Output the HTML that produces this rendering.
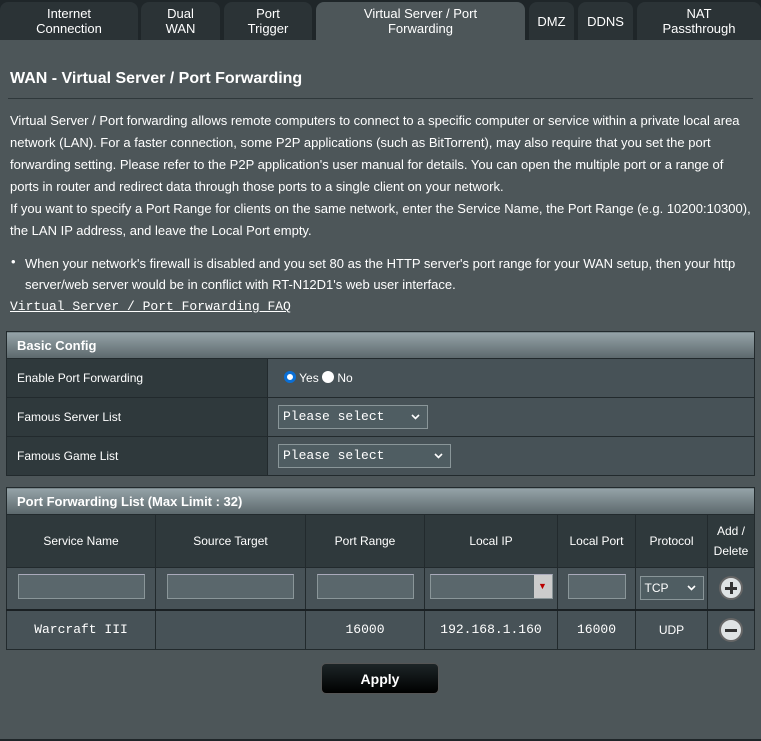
<!DOCTYPE html>
<html><head><meta charset="utf-8"><style>
*{box-sizing:border-box;margin:0;padding:0}
body{width:761px;height:741px;background:#1f2629;font-family:"Liberation Sans",Arial,sans-serif;color:#fff;position:relative;overflow:hidden}
.tab{position:absolute;top:2px;height:38px;background:#2b3336;border-radius:8px 8px 0 0;font-size:13px;text-align:center;line-height:15px;display:flex;align-items:center;justify-content:center;color:#fff}
.tab.act{background:#4d5659}
#main{position:absolute;top:40px;left:0;width:761px;height:699px;background:#4d5659}
h1{position:absolute;left:10px;top:70px;font-size:16px;font-weight:bold}
.hr{position:absolute;left:8px;top:98px;width:745px;height:1px;background:#2f383b}
.p{position:absolute;left:10px;font-size:13px;line-height:22px;width:745px}
.faq{position:absolute;left:10px;top:299px;font-family:"Liberation Mono",monospace;font-size:13px;text-decoration:underline}
table{position:absolute;left:6px;border-collapse:collapse;font-size:12px}
td,th{border:1px solid #222a2d}
.hd{background:linear-gradient(#95a3a8,#5c686c);font-weight:bold;font-size:13px;text-align:left;padding-left:10px;height:27px}
.lab{background:#2f393c;padding-left:10px}
.val{background:#475257;padding-left:10px}
.sel{display:inline-block;background:#4f5d62;border:1px solid #8a9699;height:24px;font-family:"Liberation Mono",monospace;font-size:13px;line-height:22px;padding-left:4px;position:relative}
.sel svg{position:absolute;right:7px;top:8px}
.ch th{background:#2f393c;font-weight:normal;height:53px}
.in{display:inline-block;background:#5a676c;border:1px solid #8a9699;border-top-color:#aab;height:25px}
.ir td{background:#475257;text-align:center;height:42px;border-bottom:2px solid #1a2023}
.dr td{background:#475257;text-align:center;height:40px}
.circ{display:inline-block;width:24px;height:24px;border-radius:50%;background:#dfe3e4;border:2px solid #666;position:relative;vertical-align:middle}
.circ i{position:absolute;left:4px;top:9px;width:12px;height:3px;background:#333}
.circ b{position:absolute;left:9px;top:4px;width:3px;height:12px;background:#333}
.btn{position:absolute;left:321px;top:663px;width:118px;height:31px;background:linear-gradient(#1d2527,#000);border:1px solid #555;border-radius:5px;font-weight:bold;font-size:14px;text-align:center;line-height:30px}
</style></head><body>
<div class="tab" style="left:0;width:138px">Internet<br>Connection</div>
<div class="tab" style="left:141px;width:79px">Dual<br>WAN</div>
<div class="tab" style="left:224px;width:88px">Port<br>Trigger</div>
<div class="tab act" style="left:316px;width:209px">Virtual Server / Port<br>Forwarding</div>
<div class="tab" style="left:529px;width:45px">DMZ</div>
<div class="tab" style="left:578px;width:55px">DDNS</div>
<div class="tab" style="left:637px;width:124px">NAT<br>Passthrough</div>
<div id="main"></div>
<h1>WAN - Virtual Server / Port Forwarding</h1>
<div class="hr"></div>
<div class="p" style="top:110px">Virtual Server / Port forwarding allows remote computers to connect to a specific computer or service within a private local area network (LAN). For a faster connection, some P2P applications (such as BitTorrent), may also require that you set the port forwarding setting. Please refer to the P2P application's user manual for details. You can open the multiple port or a range of ports in router and redirect data through those ports to a single client on your network.<br>If you want to specify a Port Range for clients on the same network, enter the Service Name, the Port Range (e.g. 10200:10300), the LAN IP address, and leave the Local Port empty.</div>
<div style="position:absolute;left:11px;top:254px;font-size:13px">•</div>
<div class="p" style="top:253px;line-height:21px;left:25px;width:730px">When your network's firewall is disabled and you set 80 as the HTTP server's port range for your WAN setup, then your http server/web server would be in conflict with RT-N12D1's web user interface.</div>
<div class="faq">Virtual Server / Port Forwarding FAQ</div>
<table style="top:331px;width:749px">
<tr><th colspan="2" class="hd">Basic Config</th></tr>
<tr style="height:39px"><td class="lab" style="width:261px">Enable Port Forwarding</td><td class="val" style="padding-left:16px"><span style="display:inline-block;width:12px;height:12px;border-radius:50%;background:#fff;border:3px solid #0a6fd6;vertical-align:-1px"></span> Yes <span style="display:inline-block;width:12px;height:12px;border-radius:50%;background:#fff;vertical-align:-1px"></span> No</td></tr>
<tr style="height:39px"><td class="lab">Famous Server List</td><td class="val"><span class="sel" style="width:150px">Please select<svg width="9" height="6"><path d="M1 1L4.5 4.5L8 1" stroke="#fff" stroke-width="1.6" fill="none"/></svg></span></td></tr>
<tr style="height:39px"><td class="lab">Famous Game List</td><td class="val"><span class="sel" style="width:173px">Please select<svg width="9" height="6"><path d="M1 1L4.5 4.5L8 1" stroke="#fff" stroke-width="1.6" fill="none"/></svg></span></td></tr>
</table>
<table style="top:487px;width:749px">
<tr><th colspan="7" class="hd">Port Forwarding List (Max Limit : 32)</th></tr>
<tr class="ch"><th style="width:149px">Service Name</th><th style="width:150px">Source Target</th><th style="width:119px">Port Range</th><th style="width:133px">Local IP</th><th style="width:78px">Local Port</th><th style="width:72px">Protocol</th><th style="line-height:20px">Add /<br>Delete</th></tr>
<tr class="ir"><td><span class="in" style="width:127px"></span></td><td><span class="in" style="width:127px"></span></td><td><span class="in" style="width:97px"></span></td><td><span class="in" style="width:123px;position:relative"><span style="position:absolute;right:0;top:0;width:18px;height:23px;background:#ccc;color:#b00;font-size:9px;line-height:23px">▼</span></span></td><td><span class="in" style="width:58px"></span></td><td><span class="sel" style="width:64px;font-family:'Liberation Sans';font-size:12px;text-align:left">TCP<svg width="9" height="6"><path d="M1 1L4.5 4.5L8 1" stroke="#fff" stroke-width="1.6" fill="none"/></svg></span></td><td><span class="circ"><i></i><b></b></span></td></tr>
<tr class="dr"><td style="font-family:'Liberation Mono',monospace;font-size:13px">Warcraft III</td><td></td><td style="font-family:'Liberation Mono',monospace;font-size:13px">16000</td><td style="font-family:'Liberation Mono',monospace;font-size:13px">192.168.1.160</td><td style="font-family:'Liberation Mono',monospace;font-size:13px">16000</td><td>UDP</td><td><span class="circ"><i></i></span></td></tr>
</table>
<div class="btn">Apply</div>
</body></html>
